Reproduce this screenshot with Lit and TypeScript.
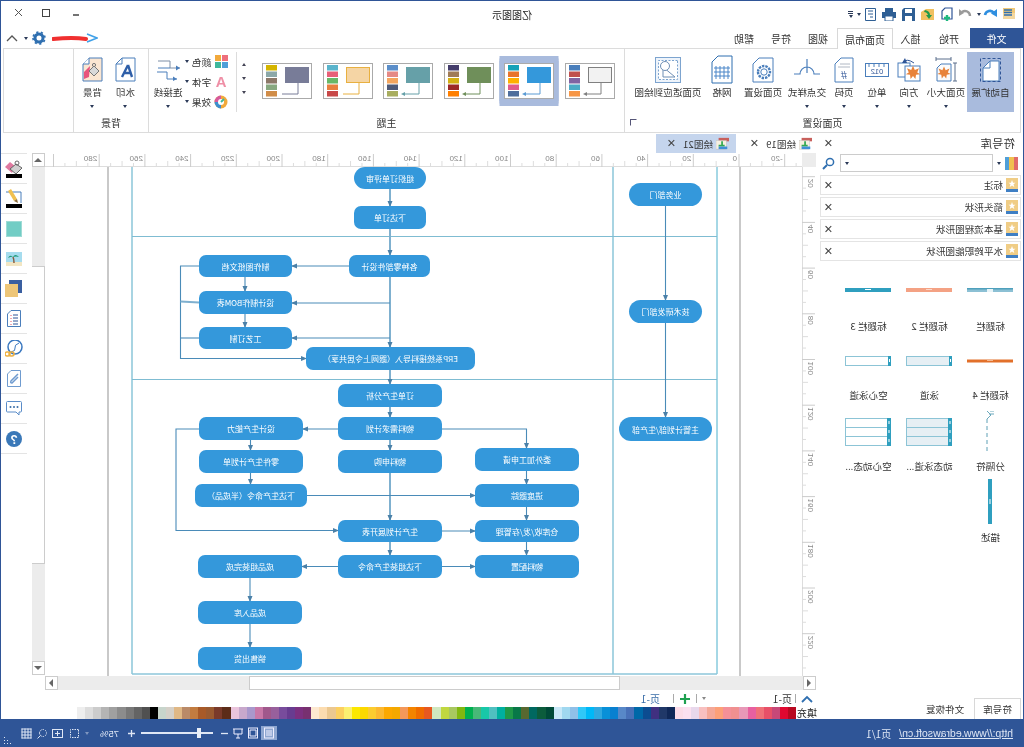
import { LitElement, html, css, svg } from "lit";
import { customElement } from "lit/decorators.js";

const BLUE = "#4a7ebb";
const ico = (w: number, h: number, vb: string, body: unknown) =>
  html`<svg width=${w} height=${h} viewBox=${vb} class="ic">${body}</svg>`;

const leaf = (x: number, y: number, s = 1) =>
  svg`<path transform="translate(${x} ${y}) scale(${s})" fill="#e8833a" d="M0-6 1.5-2.5 5-4 3.5-.5 6 1 2.5 1.5 2 5 0 2.5-2 5-2.5 1.5-6 1-3.5-.5-5-4-1.5-2.5Z"/>`;

const I = {
  auto: ico(24, 26, "0 0 24 26", svg`<path d="M3 4H12L19 11V24H3Z" fill="#fff" stroke="${BLUE}"/><path d="M12 4V11H19" fill="none" stroke="${BLUE}"/><rect x="1.5" y="1.5" width="20" height="23" fill="none" stroke="#2f5597" stroke-dasharray="3 2"/>`),
  size: ico(24, 26, "0 0 24 26", svg`<path d="M7 7H17L21 11V24H7Z" fill="#fbfbfb" stroke="${BLUE}"/>${leaf(14, 16, 1.1)}<path d="M7 2H22M7 0V4M22 0V4M3 6V24M1 6H5M1 24H5" stroke="#5a6f8c" fill="none"/>`),
  dir: ico(26, 26, "0 0 26 26", svg`<rect x="12" y="6" width="12" height="14" fill="#fff" stroke="${BLUE}"/><rect x="2" y="9" width="15" height="15" fill="#fff" stroke="${BLUE}"/>${leaf(9, 16, 1.2)}<path d="M8 6Q15 1 19 5" fill="none" stroke="#2f5597"/><path d="M17 1 20 6 15 6Z" fill="#2f5597"/>`),
  unit: ico(24, 20, "0 0 24 20", svg`<rect x=".5" y="3.5" width="23" height="13" fill="#fff" stroke="${BLUE}"/><path d="M5 4V7M10 4V7M15 4V7M20 4V7" stroke="${BLUE}"/><text x="12" y="14" text-anchor="middle" font-size="7.5" fill="#2f5597" font-family="Liberation Sans">012</text>`),
  num: ico(20, 26, "0 0 20 26", svg`<path d="M1 1H13L19 7V25H1Z" fill="#fff" stroke="${BLUE}"/><path d="M4 7H14M4 10H16" stroke="#b0b8c4"/><text x="10" y="22" text-anchor="middle" font-size="11" fill="#2f5597" font-family="Liberation Sans">#</text>`),
  cross: ico(26, 24, "0 0 26 24", svg`<path d="M0 16H6A7 7 0 0 1 20 16H26M13 1V15" fill="none" stroke="#4a7ebb" stroke-width="1.2"/>`),
  set: ico(22, 26, "0 0 22 26", svg`<path d="M1 1H15L21 7V25H1Z" fill="#fff" stroke="${BLUE}"/><circle cx="10" cy="15" r="6" fill="none" stroke="${BLUE}" stroke-width="2.4" stroke-dasharray="2.4 1"/><circle cx="10" cy="15" r="3.2" fill="none" stroke="${BLUE}"/>`),
  grid: ico(22, 29, "0 0 22 29", svg`<path d="M1 1H15L21 7V28H1Z" fill="#fff" stroke="#2f6fb0"/><path d="M5 11V24M9 11V24M13 11V24M17 11V24M3 13H19M3 17H19M3 21H19" stroke="#4a86c8"/>`),
  fit: ico(26, 26, "0 0 26 26", svg`<rect x=".5" y=".5" width="25" height="25" fill="#eef4fb" stroke="#7da4cf"/><rect x="3.5" y="3.5" width="19" height="19" fill="#fff" stroke="#7da4cf" stroke-dasharray="2 1.5"/><path d="M6 20 18 20 18 10Z" fill="none" stroke="#6f8fb5"/><circle cx="16" cy="9" r="4.5" fill="#fff" stroke="#6f8fb5"/>`),
  line: ico(24, 22, "0 0 24 22", svg`<path d="M0 9H10V2H22" fill="none" stroke="#7c8ea6"/><path d="M22 9H10" fill="none" stroke="#4a7ebb"/><path d="M3 20H13V13H23" fill="none" stroke="#4a7ebb"/><path d="M0 9 4 6.5V11.5Z" fill="#4a7ebb"/><path d="M3 20 7 17.5V22Z" fill="#4a7ebb"/>`),
  color: ico(13, 13, "0 0 13 13", svg`<rect width="6" height="6" fill="#ee6f7c"/><rect x="7" width="6" height="6" fill="#f2a93b"/><rect y="7" width="6" height="6" fill="#4f9fd8"/><rect x="7" y="7" width="6" height="6" fill="#3fb89c"/>`),
  font: html`<span class="fontA">A</span>`,
  fx: ico(14, 14, "0 0 14 14", svg`<circle cx="7" cy="7" r="6.5" fill="#f2a93b"/><path d="M7 7V.5A6.5 6.5 0 0 1 13.5 7Z" fill="#d65a9c"/><path d="M7 7H13.5A6.5 6.5 0 0 1 7 13.5Z" fill="#3c8fd0"/><circle cx="7" cy="7" r="3" fill="#fff"/><path d="M7 7 4 4" stroke="#3fb89c" stroke-width="2"/>`),
  mark: ico(24, 26, "0 0 24 26", svg`<path d="M2 1H15L21 7V24H2Z" fill="#fff" stroke="${BLUE}"/><path d="M15 1V7H21" fill="none" stroke="${BLUE}"/><path d="M9 8 5 20M9 8 15 20M6 16H13" stroke="#2f5fa8" stroke-width="2.4" fill="none"/>`),
  bg: ico(24, 26, "0 0 24 26", svg`<path d="M2 1H15L21 7V24H2Z" fill="#fbe6d2" stroke="${BLUE}"/><path d="M15 1V7H21" fill="#fff" stroke="${BLUE}"/><path d="M14 9 20 15 20 22 15 20Z" fill="#e8537c"/><path d="M5 14 10 9 15 14 10 19Z" fill="#d9d9d9" stroke="#777"/><circle cx="10" cy="8" r="1.6" fill="none" stroke="#777"/>`),
  qFile: ico(14, 14, "0 0 14 14", svg`<rect x="1" y="1" width="12" height="11" fill="#f0c878"/><rect x="1" y="6" width="12" height="6" fill="#f3d79f"/><path d="M4 3H12M4 5.500H12M4 8H12" stroke="#2f6fb0" stroke-width="1.6"/>`),
  qRedo: ico(15, 12, "0 0 15 12", svg`<path d="M13 7A5 5 0 0 0 4 5" fill="none" stroke="#2f8fe0" stroke-width="2.6"/><path d="M1 1 7 5.500 1 9Z" fill="#2f8fe0"/>`),
  qUndo: ico(14, 12, "0 0 14 12", svg`<path d="M2 8A5 5 0 0 1 10 4" fill="none" stroke="#9a9a9a" stroke-width="2.4"/><path d="M13 1 8 5 13 8Z" fill="#9a9a9a"/>`),
  qNew: ico(15, 15, "0 0 15 15", svg`<path d="M1 1H8L11 4V12H1Z" fill="#fff" stroke="#2f5597" stroke-width="1.2"/><path d="M3 11H9M6 8V14" stroke="#1fb87f" stroke-width="2.4"/>`),
  qOpen: ico(15, 13, "0 0 15 13", svg`<path d="M1 1H9L14 4V12H1Z" fill="#f0c060"/><path d="M10 2Q5 3 5 7L3 7 6 11 9 7 7 7Q8 4 11 4Z" fill="#1f9a4a"/>`),
  qSave: ico(13, 13, "0 0 13 13", svg`<path d="M0 0H11L13 2V13H0Z" fill="#2f5f94"/><rect x="3" y="1" width="7" height="4" fill="#fff"/><rect x="3" y="8" width="7" height="5" fill="#fff"/>`),
  qPrint: ico(14, 13, "0 0 14 13", svg`<rect x="3" y="0" width="8" height="4" fill="#2f5f94"/><rect y="4" width="14" height="6" fill="#2f5f94"/><rect x="3" y="8" width="8" height="5" fill="#fff" stroke="#2f5f94"/>`),
  qDoc: ico(11, 13, "0 0 11 13", svg`<path d="M.5.500H10.500V12.500H.5Z" fill="#fff" stroke="#2f5f94"/><path d="M3 3H8M3 6H8M3 9H6" stroke="#2f5f94"/>`),
};

const NODES: [string, number, number, number, number, number][] = [
  ["组织订单评审", 354, 426, 167, 189, 11],
  ["下达订单", 354, 426, 206, 229, 7],
  ["各种零部件设计", 349, 430, 255, 277, 7],
  ["制作图纸文档", 199, 292, 255, 277, 7],
  ["设计制作BOM表", 199, 292, 291, 314, 7],
  ["工艺订制", 199, 292, 327, 349, 7],
  ["ERP系统接料导入（跟网上令居共享）", 306, 475, 347, 370, 7],
  ["订单生产分析", 338, 442, 384, 407, 7],
  ["物料需求计划", 338, 442, 417, 440, 7],
  ["设计生产能力", 199, 303, 417, 440, 7],
  ["零件生产计划单", 199, 303, 450, 473, 7],
  ["下达生产命令（半成品）", 195, 307, 484, 507, 7],
  ["物料申购", 338, 442, 450, 473, 7],
  ["委外加工申请", 475, 579, 448, 471, 7],
  ["进度跟踪", 475, 579, 484, 507, 7],
  ["生产计划展开表", 338, 442, 520, 542, 7],
  ["仓库收/发/存管理", 475, 579, 520, 542, 7],
  ["下达组装生产命令", 338, 442, 555, 578, 7],
  ["物料配置", 475, 579, 555, 578, 7],
  ["成品组装完成", 198, 302, 555, 578, 7],
  ["成品入库", 198, 302, 601, 624, 7],
  ["销售出货", 198, 302, 647, 670, 7],
  ["业务部门", 629, 702, 183, 206, 12],
  ["技术研发部门", 629, 702, 300, 323, 12],
  ["主管计划部/生产部", 619, 712, 417, 441, 12],
];

// [points, arrow, thick]
const LINES: [number[][], number, number][] = [
  [[[390, 189], [390, 206]], 1, 1],
  [[[390, 229], [390, 255]], 1, 1],
  [[[390, 277], [390, 347]], 1, 1],
  [[[390, 370], [390, 384]], 1, 1],
  [[[390, 407], [390, 417]], 1, 1],
  [[[390, 440], [390, 450]], 1, 1],
  [[[390, 473], [390, 520]], 1, 1],
  [[[390, 542], [390, 555]], 1, 1],
  [[[349, 266], [292, 266]], 1, 0],
  [[[390, 303], [292, 303]], 1, 0],
  [[[390, 338], [292, 338]], 1, 0],
  [[[245, 277], [245, 291]], 1, 0],
  [[[245, 314], [245, 327]], 1, 0],
  [[[199, 266], [180.500, 266], [180.500, 358.500], [306, 358.500]], 1, 0],
  [[[199, 338], [180.500, 338]], 0, 0],
  [[[199, 302.500], [180.500, 301.500]], 0, 1],
  [[[338, 429], [303, 429]], 1, 0],
  [[[199, 429], [176, 429], [176, 530.500], [338, 530.500]], 1, 0],
  [[[442, 429], [526.500, 429], [526.500, 448]], 1, 0],
  [[[250.500, 440], [250.500, 450]], 1, 0],
  [[[250.500, 473], [250.500, 484]], 1, 0],
  [[[307, 495.500], [475, 495.500]], 1, 0],
  [[[526.500, 471], [526.500, 484]], 1, 0],
  [[[526.500, 507], [526.500, 520]], 1, 0],
  [[[526.500, 542], [526.500, 555]], 1, 0],
  [[[442, 531], [475, 531]], 1, 0],
  [[[338, 566.500], [302, 566.500]], 1, 0],
  [[[442, 566.500], [475, 566.500]], 1, 0],
  [[[250, 578], [250, 601]], 1, 0],
  [[[250, 624], [250, 647]], 1, 0],
  [[[665.500, 206], [665.500, 300]], 1, 0],
  [[[665.500, 323], [665.500, 417]], 1, 0],
];

const THEMES: [string[], string, string, string, number][] = [
  [["#4a7ebb", "#c0504d", "#8064a2", "#4bacc6", "#f79646"], "#f2f2f2", "#808080", "#808080", 1],
  [["#17a2b8", "#e8742c", "#ffb000", "#e05c8c", "#4f6e9c"], "#3498db", "#3498db", "#5a9bd4", 1],
  [["#443d6b", "#a07c58", "#d4b014", "#9c2828", "#ff7f00"], "#6f8f5a", "#6f8f5a", "#6f8f5a", 1],
  [["#5b8ec9", "#e58a86", "#f4a65e", "#4e5a78", "#a8ad5f"], "#66a0a8", "#66a0a8", "#66a0a8", 1],
  [["#5ab4cc", "#e86078", "#68b868", "#e88040", "#c84848"], "#f5d5a5", "#e8b040", "#e8b040", 0],
  [["#d4b400", "#8ca8a8", "#8c7868", "#88a880", "#d08c48"], "#787c98", "#787c98", "#787c98", 0],
];

const SWATCHES = "eeeeee dddddd cccccc b4b4b4 a0a0a0 8c8c8c 787878 646464 505050 000000 c8d5cc d5d0c8 e0b885 ba8a68 c27c40 a85a28 9a5a30 7a3a2a 5c2c18 eac4dc c8a8cc a998cc c878a8 a0588c 98609c 784c9c 683c90 7c3080 783070 fde8d0 fcdcb0 ecc890 fcd060 fcf070 fce800 fcd800 fccc30 fcb830 fca800 f4a800 f4985a f48400 f06c00 e85820 d0e8c0 c0d840 a8c860 80b810 00b050 48b878 18c8a8 50c0c0 00b0a0 209848 087848 586830 006860 0c5c3c 004a38 c8e8f8 a0d8f0 90c0e8 30c8f8 00b8f8 30a8e0 0890d8 0880d0 5888c8 4870b8 0068a8 0c4c90 403080 203868 102858 fcdce8 fce0f0 e8d8ec f8c0c0 f4a898 fca078 f49098 f09090 e898b8 e860a0 f07078 e85068 c84878 e00830 b80820".split(" ").reverse();

const cx = (x: number) => 802 - x;
const cy = (y: number) => y - 167;

const range = (a: number, b: number, s: number) => {
  const r: number[] = [];
  for (let v = a; v <= b; v += s) r.push(v);
  return r;
};

const star = ico(12, 14, "0 0 12 14", svg`<rect width="12" height="14" fill="#f0cd86"/><rect y="11" width="12" height="3" fill="#3f7fc4"/><path d="M6 2 7 4.700 9.500 4.700 7.500 6.300 8.300 9 6 7.400 3.700 9 4.500 6.300 2.500 4.700 5 4.700Z" fill="#fff"/>`);
const docTabIcon = ico(13, 13, "0 0 15 13", svg`<rect x="0" y="0" width="12" height="4" fill="#c8605c"/><rect x="3" y="3" width="12" height="10" fill="#f6f0e2" stroke="#bbb" stroke-width=".5"/><path d="M8 4V9M5 9H12" stroke="#32a852" stroke-width="2"/><rect x="2" y="10" width="10" height="3" fill="#3f8fd8"/>`);

@customElement("app-root")
export class AppRoot extends LitElement {
  static styles = css`
    :host {
      display: flex;
      flex-direction: column;
      width: 1024px;
      height: 747px;
      box-sizing: border-box;
      transform: scaleX(-1);
      filter: blur(0.3px);
      overflow: hidden;
      background: #fff;
      border: 1px solid #2f5597;
      border-bottom: 0;
      font-family: "Noto Sans CJK SC", "Liberation Sans", sans-serif;
      font-size: 10px;
      color: #333;
      --nv: #2f5597;
    }
    svg.ic { display: block; flex: none; }
    .title { display: grid; grid-template-columns: 1fr auto 1fr; height: 26px; align-items: center; flex: none; }
    .qa { display: flex; align-items: center; padding-left: 5px; }
    .qa > div { display: flex; justify-content: center; align-items: center; height: 16px; }
    .caret { width: 0; height: 0; border: 2.500px solid transparent; border-top: 3px solid #2b3a58; border-bottom: 0; }
    .ddbar { display: flex; flex-direction: column; align-items: center; gap: 1px; }
    .ddbar i { display: block; width: 5px; height: 1px; background: #2b3a58; }
    .ttl { font-size: 10px; color: #222; }
    .win { display: flex; justify-content: flex-end; align-items: center; }
    .tabs { display: flex; height: 20px; flex: none; margin-top: 1px; align-items: stretch; }
    .tab { display: flex; align-items: center; justify-content: center; box-sizing: border-box; }
    .tab.file { background: var(--nv); color: #fff; }
    .tab.on { border: 1px solid #d8d8d8; border-bottom: 0; background: #fff; margin-bottom: -1px; position: relative; z-index: 1; }
    .qr { flex: 1; display: flex; align-items: center; justify-content: flex-end; padding-right: 4px; }
    .ribbon { display: flex; height: 85px; flex: none; box-sizing: border-box; margin: 0 2px; border: 1px solid #dcdcdc; }
    .grp { display: flex; flex-direction: column; border-right: 1px solid #dcdcdc; box-sizing: border-box; position: relative; flex: none; }
    .grp-body { display: flex; flex: none; padding-top: 3px; box-sizing: border-box; height: 65px; align-items: flex-start; }
    .grp-label { flex: 1; display: flex; align-items: center; justify-content: center; color: #333; padding-bottom: 2px; }
    .launch { position: absolute; right: 5px; bottom: 6px; width: 5px; height: 5px; border: 1px solid #557; border-left-color: transparent; border-bottom-color: transparent; }
    .rbtn { display: flex; flex-direction: column; align-items: center; height: 60px; box-sizing: border-box; }
    .rbtn.on { background: #a9bbdd; }
    .rbtn .icw { height: 31px; display: flex; align-items: center; justify-content: center; padding-top: 2px; }
    .rbtn .lb { height: 14px; line-height: 14px; white-space: nowrap; margin-top: 0; font-size: 9.6px; }
    .rbtn .caret { margin-top: 6px; }
    .gallery { display: flex; gap: 10.600px; padding: 14px 0 0 9px; width: 372px; box-sizing: border-box; }
    .thumb { width: 50px; height: 36px; flex: none; box-sizing: border-box; border: 1px solid #aaa; background: #fff; }
    .thumb.sel { box-shadow: 0 0 0 4.500px #a9bbdd, 0 2.500px 0 4.500px #a9bbdd, 0 -2.500px 0 4.500px #a9bbdd; }
    .garrows { width: 16px; display: flex; flex-direction: column; align-items: center; padding-top: 11px; gap: 11px; border-right: 1px solid #dcdcdc; height: 60px; box-sizing: border-box; }
    .garrows span { display: block; width: 0; height: 0; border: 2.500px solid transparent; }
    .garrows .u { border-bottom: 3px solid #445; border-top: 0; }
    .garrows .d { border-top: 3px solid #445; border-bottom: 0; }
    .fxs { width: 51px; padding: 5px 0 0 8px; box-sizing: border-box; display: flex; flex-direction: column; gap: 5px; }
    .fx { display: flex; align-items: center; height: 15px; gap: 3px; font-size: 9.6px; white-space: nowrap; }
    .fx > :first-child { width: 14px; display: flex; justify-content: center; }
    .fontA { font: bold 15px/15px "Liberation Sans", sans-serif; color: #ef8fa6; }
    .main { flex: 1; display: flex; min-height: 0; }
    .panel { width: 201px; flex: none; display: flex; flex-direction: column; position: relative; box-sizing: border-box; padding: 0 0 0 2px; }
    .ph { display: flex; justify-content: space-between; align-items: center; height: 20px; font-size: 11.500px; padding: 0 2px 0 6px; flex: none; }
    .x { font: 11px/11px "Liberation Sans", sans-serif; color: #444; }
    .srch { display: flex; align-items: center; height: 18px; padding-left: 3px; flex: none; margin-top: 1px; }
    .inp { width: 153px; height: 18px; box-sizing: border-box; border: 1px solid #ccc; display: flex; align-items: center; justify-content: flex-end; padding-right: 4px; margin: 0 5px 0 4px; }
    .secs { display: flex; flex-direction: column; gap: 2px; margin-top: 3px; width: 201px; }
    .sec { height: 20px; border: 1px solid #e4e4e4; box-sizing: border-box; display: flex; align-items: center; gap: 3px; padding: 0 3px 0 2px; font-size: 9.6px; }
    .sec b { font-weight: 400; flex: 1; }
    .shapes { display: grid; grid-template-columns: repeat(3, 61px); margin-top: 10px; }
    .cell { display: flex; flex-direction: column; align-items: center; }
    .cell .s { display: flex; align-items: center; justify-content: center; width: 100%; }
    .cell .l { display: flex; align-items: center; justify-content: center; font-size: 9.6px; white-space: nowrap; }
    .ptabs { position: absolute; left: 2px; bottom: 0; display: flex; align-items: stretch; height: 21px; }
    .ptab { width: 47px; display: flex; align-items: center; justify-content: center; border: 1px solid #d8d8d8; border-bottom: 0; box-sizing: border-box; font-size: 9.6px; }
    .ptab.off { border: 0; width: 58px; }
    .center { width: 790px; flex: none; display: flex; flex-direction: column; }
    .dtabs { display: flex; height: 19px; margin-top: 1px; flex: none; width: 822px; position: relative; z-index: 2; }
    .dtab { width: 86px; display: flex; align-items: center; gap: 3px; padding-left: 10px; box-sizing: border-box; font-size: 9.6px; }
    .dtab .x { margin-left: 4px; }
    .dtab.on { background: #c5d5ed; width: 80px; padding-left: 7px; }
    .work { display: grid; grid-template-columns: 14px 757px 13px; grid-template-rows: 14px 509px 14px; margin-left: 6px; flex: none; }
    .corner { background: #ececec; }
    .vruler, .hruler { background: #fff; overflow: hidden; }
    .canvas { position: relative; overflow: hidden; background: #fff; }
    .canvas svg { position: absolute; inset: 0; }
    .node { position: absolute; display: flex; align-items: center; justify-content: center; background: #3498db; color: #fff; font-size: 8px; white-space: nowrap; box-sizing: border-box; }
    .vs { grid-column: 3; grid-row: 1 / 4; display: flex; flex-direction: column; height: 522px; }
    .sb { display: flex; align-items: center; justify-content: center; background: #fff; border: 1px solid #ccc; box-sizing: border-box; flex: none; }
    .track { background: #ececec; flex: none; }
    .thv { background: #fff; border: 1px solid #ccc; border-right: 0; border-left: 1px solid #ccc; box-sizing: border-box; flex: none; }
    .hs { grid-column: 1 / 3; grid-row: 3; display: flex; height: 14px; }
    .tri-u { width: 0; height: 0; border: 4px solid transparent; border-bottom: 4px solid #666; border-top: 0; }
    .tri-d { width: 0; height: 0; border: 4px solid transparent; border-top: 4px solid #666; border-bottom: 0; }
    .tri-l { width: 0; height: 0; border: 4px solid transparent; border-right: 4px solid #666; border-left: 0; }
    .tri-r { width: 0; height: 0; border: 4px solid transparent; border-left: 4px solid #666; border-right: 0; }
    .pages { display: flex; align-items: center; height: 17px; flex: none; font-size: 10px; padding-left: 9px; position: relative; }
    .pages .sep { width: 1px; height: 9px; background: #aaa; }
    .colors { display: flex; height: 12px; flex: none; align-items: stretch; padding-left: 5px; }
    .colors span { width: 21px; font-size: 10px; line-height: 12px; color: #222; white-space: nowrap; }
    .colors i { display: block; width: 8.080px; flex: none; }
    .side { flex: 1; display: flex; flex-direction: column; margin-top: 20px; }
    .sic { height: 30px; box-sizing: border-box; border-top: 1.500px solid #e4e4e4; display: flex; align-items: center; justify-content: center; margin-left: 5px; }
    .status { height: 28px; flex: none; background: var(--nv); color: #dfe7f5; display: flex; justify-content: space-between; align-items: center; margin: 0 -1px; padding: 0 3px 0 11px; font-size: 10px; position: relative; }
    .status .left { display: flex; gap: 8px; align-items: center; }
    .status u { font-family: "Liberation Sans", sans-serif; font-size: 10.500px; }
    .status .right { display: flex; align-items: center; height: 100%; }
    .st { display: flex; align-items: center; justify-content: center; }
    .st.on { background: #8ea6d0; height: 14px; }
    .st.grip { width: 16px; align-self: flex-end; padding-bottom: 2px; justify-content: flex-end; }
    .slider { width: 72px; height: 1.500px; background: #dfe7f5; position: relative; margin: 0 5px; }
    .slider::after { content: ""; position: absolute; left: 12px; top: -4px; width: 4px; height: 10px; background: #e8eef8; }
  `;

  private rb(label: string, w: number, icon: unknown, caret = false, on = false) {
    return html`<div class="rbtn ${on ? "on" : ""}" style="width:${w}px">
      <div class="icw">${icon}</div><div class="lb">${label}</div>${caret ? html`<div class="caret"></div>` : ""}
    </div>`;
  }

  private thumb(t: [string[], string, string, string, number], sel: boolean) {
    const [sw, fill, stroke, ln, arrow] = t;
    return html`<div class="thumb ${sel ? "sel" : ""}"><svg width="48" height="34" viewBox="0 0 48 34" class="ic">
      ${sw.map((c, i) => svg`<rect x="34" y=${1 + i * 6.500} width="11" height="5.500" fill=${c}/>`)}
      <rect x="2.500" y="3.500" width="23" height="15" fill=${fill} stroke=${stroke}/>
      <path d="M13 19V30H29" fill="none" stroke=${ln} stroke-width="1"/>
      ${arrow ? svg`<path d="M31 30 27 28V32Z" fill=${ln}/>` : ""}
    </svg></div>`;
  }

  private shape(kind: string) {
    const teal = "#2f9fbf";
    const bar = (c: string, h: number, c2 = "#fff") => svg`<rect x="0" y=${(8 - h) / 2} width="46" height=${h} fill=${c}/><rect x="20" y="3" width="6" height="1" fill=${c2}/>`;
    if (kind === "t1") return ico(46, 8, "0 0 46 8", svg`<rect y="2" width="46" height="4" fill="#8cc0d4"/><rect y="2" width="46" height="1.500" fill="#4fa0bc"/><rect x="20" y="3" width="6" height="3" fill="#e8f4f8"/>`);
    if (kind === "t2") return ico(46, 8, "0 0 46 8", bar("#f4a284", 4, "#fcd8c8"));
    if (kind === "t3") return ico(46, 8, "0 0 46 8", bar(teal, 4));
    if (kind === "t4") return ico(46, 8, "0 0 46 8", bar("#e2702a", 3, "#f4b890"));
    if (kind === "lane" || kind === "hollow") return ico(46, 10, "0 0 46 10", svg`<rect x=".5" y=".5" width="45" height="9" fill=${kind === "lane" ? "#e6eff4" : "#fff"} stroke="#8cc4d6"/><rect x="0" y="0" width="3" height="10" fill=${teal}/><rect x="1" y="3" width="1" height="3" fill="#fff"/>`);
    if (kind === "sep") return ico(14, 42, "0 0 14 42", svg`<path d="M7 0H3M10 0 6 4 10 8" fill="none" stroke="#6aa8bc"/><path d="M3 3H8" stroke="#6aa8bc"/><path d="M10 8V42" stroke="#5fa0b6" stroke-dasharray="4 3"/>`);
    if (kind === "dyn" || kind === "hdyn") {
      const f = kind === "dyn" ? "#e6eff4" : "#fff";
      return ico(46, 28, "0 0 46 28", svg`${[0.5, 9.5, 18.5].map((y) => svg`<rect x=".5" y=${y} width="45" height="9" fill=${f} stroke="#8cc4d6"/>`)}<rect width="4" height="28" fill=${teal}/><path d="M2 3V6M2 12V15M2 21V24" stroke="#fff"/>`);
    }
    return ico(6, 45, "0 0 6 45", svg`<rect x="1" width="4" height="45" fill=${teal}/><rect x="2.500" y="20" width="1" height="5" fill="#fff"/>`);
  }

  render() {
    const qa: [number, unknown][] = [
      [18, I.qFile], [18, I.qRedo], [6, html`<div class="caret"></div>`], [21, I.qUndo], [18, I.qNew], [19, I.qOpen], [19, I.qSave],
      [19, I.qPrint], [18, I.qDoc], [6, html`<div class="caret"></div>`], [10, html`<div class="ddbar"><i></i><i></i><div class="caret"></div></div>`],
    ];
    const tabs: [string, number, string][] = [["文件", 53, "file"], ["开始", 42, ""], ["插入", 35, ""], ["页面布局", 56, "on"], ["视图", 38, ""], ["符号", 36, ""], ["帮助", 38, ""]];
    const shapes: [string, string, number, number][] = [
      ["标题栏", "t1", 38, 34], ["标题栏 2", "t2", 38, 34], ["标题栏 3", "t3", 38, 34],
      ["标题栏 4", "t4", 36, 32], ["泳道", "lane", 36, 32], ["空心泳道", "hollow", 36, 32],
      ["分隔符", "sep", 42, 26], ["动态泳道...", "dyn", 42, 26], ["空心动态...", "hdyn", 42, 26],
      ["描述", "desc", 45, 26],
    ];
    const side = [
      ico(20, 20, "0 0 20 20", svg`<rect x="2" y="15" width="16" height="4" fill="#000"/><path d="M9 7 14 3 19 8 12 14Z" fill="#e07aa0"/><path d="M2 9 8 5 14 10 8 15Z" fill="#d0d0d0" stroke="#666"/><circle cx="7" cy="4" r="2" fill="none" stroke="#666"/>`),
      ico(20, 20, "0 0 20 20", svg`<path d="M1 3H16V14" fill="none" stroke="#4a7ebb" transform="translate(2 0) scale(-1 1) translate(-17 0)"/><path d="M16 2 10 12 7 10 13 0Z" fill="#f0c050"/><path d="M7 10 6 14 10 12Z" fill="#8a6a3a"/><rect x="2" y="15" width="16" height="4" fill="#000"/>`),
      ico(16, 16, "0 0 16 16", svg`<rect x=".5" y=".5" width="15" height="15" fill="#72cdc5" stroke="#9edbd5"/>`),
      ico(16, 14, "0 0 16 14", svg`<rect width="16" height="14" fill="#a6dcee"/><rect y="10" width="16" height="4" fill="#f2e6c4"/><path d="M8 11Q8 7 9 5" stroke="#8a5a3a" fill="none" stroke-width="1.500"/><path d="M3 5Q7 1 9 5Q12 2 14 6Q10 4 9 5Q6 4 3 5Z" fill="#1f9a7a"/>`),
      ico(17, 17, "0 0 17 17", svg`<rect x="0" y="0" width="13" height="13" fill="#3a5fa0"/><rect x="4" y="4" width="13" height="13" fill="#eec678"/>`),
      ico(14, 17, "0 0 14 17", svg`<path d="M.5.500H10L13.500 4V16.500H.5Z" fill="#fff" stroke="#4a7ebb"/><path d="M3 5H8M3 8H8M3 11H8M3 14H8" stroke="#2f5597"/><path d="M10 5V6M10 8V9M10 11V12M10 14V15" stroke="#e05060"/>`),
      ico(18, 18, "0 0 18 18", svg`<circle cx="8" cy="7" r="7" fill="#fff" stroke="#3a78c0" stroke-width="1.500"/><path d="M4 3Q9 5 8 8T12 12" fill="none" stroke="#3a78c0"/><rect x="9" y="12" width="5" height="4" rx="2" fill="none" stroke="#eeb040" stroke-width="1.500"/><rect x="13" y="12" width="5" height="4" rx="2" fill="none" stroke="#eeb040" stroke-width="1.500"/>`),
      ico(14, 17, "0 0 14 17", svg`<path d="M.5.500H10L13.500 4V16.500H.5Z" fill="#fff" stroke="#6f9bcf"/><path d="M3 4 10 11Q11 13 9 13L3 7" fill="none" stroke="#6f9bcf" stroke-width="1.500"/>`),
      ico(16, 15, "0 0 16 15", svg`<path d="M1.500.500H14.500Q15.500.500 15.500 1.500V10Q15.500 11 14.500 11H6L3 14V11H1.500Q.5 11 .5 10V1.500Q.5.500 1.500.500Z" fill="#fff" stroke="#5a8cc8"/><circle cx="4.500" cy="6" r="1" fill="#3a6ea8"/><circle cx="8" cy="6" r="1" fill="#3a6ea8"/><circle cx="11.500" cy="6" r="1" fill="#3a6ea8"/>`),
      ico(16, 16, "0 0 16 16", svg`<circle cx="8" cy="8" r="8" fill="#3a78b8"/><text x="8" y="12.500" text-anchor="middle" font-size="12" font-weight="700" fill="#fff" font-family="Liberation Sans">?</text>`),
    ];
    const X = html`<span class="x">✕</span>`;
    return html`
      <div class="title">
        <div class="qa">${qa.map(([w, i]) => html`<div style="width:${w}px">${i}</div>`)}</div>
        <div class="ttl">亿图图示</div>
        <div class="win">
          <svg width="90" height="14" viewBox="0 0 90 14" class="ic">
            <path d="M12 8H18" stroke="#444" stroke-width="1.500"/><rect x="41.500" y="2.500" width="7" height="7" fill="none" stroke="#444"/><path d="M69 2 76 9M76 2 69 9" stroke="#555"/>
          </svg>
        </div>
      </div>
      <div class="tabs">
        ${tabs.map(([t, w, c]) => html`<div class="tab ${c}" style="width:${w}px">${t}</div>`)}
        <div class="qr">
          <svg width="46" height="12" viewBox="0 0 46 12" class="ic"><path d="M11 2 1 6 11 10" fill="none" stroke="#3fa0e8" stroke-width="1.500"/><path d="M12 7Q25 5 45 7" stroke="#f03030" stroke-width="4" fill="none" stroke-linecap="round"/></svg>
          <svg width="14" height="14" viewBox="0 0 14 14" class="ic" style="margin-left:6px"><circle cx="7" cy="7" r="4" fill="none" stroke="#2f6fb0" stroke-width="3"/><circle cx="7" cy="7" r="6" fill="none" stroke="#2f6fb0" stroke-width="1.600" stroke-dasharray="2.200 2.500"/></svg>
          <div class="caret" style="margin-left:4px"></div>
          <svg width="14" height="10" viewBox="0 0 14 10" class="ic" style="margin-left:5px"><path d="M2 8 7 3 12 8" fill="none" stroke="#555" stroke-width="1.300"/></svg>
        </div>
      </div>
      <div class="ribbon">
        <div class="grp" style="width:396px">
          <div class="grp-body" style="padding-left:6px">
            ${this.rb("自动扩展", 47, I.auto, false, true)}
            ${this.rb("页面大小", 42, I.size, true)}
            ${this.rb("方向", 32, I.dir, true)}
            ${this.rb("单位", 32, I.unit, true)}
            ${this.rb("页码", 34, I.num, true)}
            ${this.rb("交点样式", 40, I.cross, true)}
            ${this.rb("页面设置", 48, I.set)}
            ${this.rb("网格", 34, I.grid)}
            ${this.rb("页面适应到绘图", 74, I.fit)}
          </div>
          <div class="grp-label">页面设置</div>
          <div class="launch"></div>
        </div>
        <div class="grp" style="width:476px">
          <div class="grp-body" style="padding-top:0">
            <div class="gallery">${THEMES.map((t, i) => this.thumb(t, i === 1))}</div>
            <div class="garrows" style="margin-top:3px"><span class="u"></span><span class="d"></span><span class="d"></span></div>
            <div class="fxs">
              <div class="fx"><div>${I.color}</div>颜色<div class="caret"></div></div>
              <div class="fx"><div>${I.font}</div>字体<div class="caret"></div></div>
              <div class="fx"><div>${I.fx}</div>效果<div class="caret"></div></div>
            </div>
            <div style="padding-top:3px">${this.rb("连接线", 34, I.line, true)}</div>
          </div>
          <div class="grp-label">主题</div>
        </div>
        <div class="grp" style="width:75px">
          <div class="grp-body" style="padding-left:6px">
            ${this.rb("水印", 33, I.mark, true)}
            ${this.rb("背景", 33, I.bg, true)}
          </div>
          <div class="grp-label">背景</div>
        </div>
      </div>
      <div class="main">
        <div class="panel">
          <div class="ph"><span>符号库</span>${X}</div>
          <div class="srch">
            ${ico(13, 13, "0 0 13 13", svg`<rect width="4" height="13" fill="#e06a6a"/><rect x="4" width="5" height="13" fill="#f0c050"/><rect x="9" width="4" height="13" fill="#4f9fd8"/>`)}
            <div class="caret" style="margin-left:4px"></div>
            <div class="inp"><div class="caret"></div></div>
            <svg width="13" height="13" viewBox="0 0 13 13" class="ic"><path d="M12 12 8 8" stroke="#2f6fb0" stroke-width="2"/><circle cx="5" cy="5" r="3.600" fill="#fff" stroke="#2f6fb0" stroke-width="1.500"/></svg>
          </div>
          <div class="secs">
            ${["标注", "箭头形状", "基本流程图形状", "水平跨职能图形状"].map((t) => html`<div class="sec">${star}<b>${t}</b>${X}</div>`)}
          </div>
          <div class="shapes">
            ${shapes.map(([l, k, a, b]) => html`<div class="cell"><div class="s" style="height:${a}px">${this.shape(k)}</div><div class="l" style="height:${b}px">${l}</div></div>`)}
          </div>
          <div class="ptabs"><div class="ptab">符号库</div><div class="ptab off">文件恢复</div></div>
        </div>
        <div class="center">
          <div class="dtabs">
            <div class="dtab">${docTabIcon}绘图19${X}</div>
            <div class="dtab on">${docTabIcon}绘图21${X}</div>
          </div>
          <div class="work">
            <div class="corner"></div>
            <div class="hruler">
              <svg width="757" height="14" viewBox="0 0 757 14" class="ic">
                <rect x="0" y="13" width="757" height="1" fill="#ddd"/>
                ${range(-25, 310, 5).map((v) => {
                  const x = 63 + 2.285 * v;
                  const big = v % 20 === 0;
                  return svg`<path d="M${x} ${big ? 1 : v % 10 === 0 ? 8 : 10}V14" stroke=${big ? "#ccc" : "#ddd"}/>${big && v < 300 ? svg`<text x=${x + 2} y="8" font-size="8" fill="#888" font-family="Liberation Sans">${v}</text>` : ""}`;
                })}
              </svg>
            </div>
            <div class="vruler">
              <svg width="14" height="509" viewBox="0 0 14 509" class="ic">
                <rect x="13" y="0" width="1" height="509" fill="#ddd"/>
                ${range(20, 235, 5).map((v) => {
                  const y = -36 + 2.285 * v;
                  const big = v % 20 === 0;
                  return svg`<path d="M${big ? 1 : v % 10 === 0 ? 8 : 10} ${y}H14" stroke=${big ? "#ccc" : "#ddd"}/>${big ? svg`<text transform="translate(3 ${y + 2}) rotate(90)" font-size="8" fill="#888" font-family="Liberation Sans">${v}</text>` : ""}`;
                })}
              </svg>
            </div>
            <div class="canvas">
              <svg width="757" height="509" viewBox="0 0 757 509">
                <defs>
                  <marker id="ah" markerUnits="userSpaceOnUse" markerWidth="6" markerHeight="6" refX="5" refY="3" orient="auto"><path d="M0 .5 6 3 0 5.500Z" fill="#4a80a8"/></marker>
                </defs>
                <path d="M${cx(108)} 0V509M${cx(740)} 0V509" stroke="#c9c9c9" stroke-width="2"/>
                <path d="M${cx(132)} 0V${cy(674)}M${cx(613)} 0V${cy(674)}" stroke="#a8d4e2" stroke-width="2"/>
                <path d="M${cx(717)} 0V${cy(674)}" stroke="#4cb0cc"/>
                <path d="M${cx(717)} ${cy(236.500)}H${cx(132)}M${cx(717)} ${cy(379.500)}H${cx(132)}" stroke="#7fbcd2"/>
                <path d="M${cx(717)} ${cy(674)}H${cx(132)}" stroke="#8cc6da" stroke-width="1.500"/>
                ${LINES.map(([p, a, t]) => svg`<path d=${"M" + p.map(([x, y]) => `${cx(x)} ${cy(y)}`).join("L")} fill="none" stroke=${t ? "#7fb0cf" : "#4a8bb8"} stroke-width=${t ? 2 : 1.100} marker-end=${a ? "url(#ah)" : ""}/>`)}
              </svg>
              ${NODES.map(([t, x1, x2, y1, y2, r]) => html`<div class="node" style="left:${cx(x2)}px;top:${cy(y1)}px;width:${x2 - x1}px;height:${y2 - y1}px;border-radius:${r}px">${t}</div>`)}
            </div>
            <div class="vs">
              <div class="sb" style="height:14px"><div class="tri-u"></div></div>
              <div class="track" style="height:99px"></div>
              <div class="thv" style="height:298px"></div>
              <div class="track" style="height:97px"></div>
              <div class="sb" style="height:14px"><div class="tri-d"></div></div>
            </div>
            <div class="hs">
              <div class="sb" style="width:13px"><div class="tri-l"></div></div>
              <div class="track" style="width:183px"></div>
              <div class="thv" style="width:371px;border:1px solid #ccc"></div>
              <div class="track" style="width:191px"></div>
              <div class="sb" style="width:13px"><div class="tri-r"></div></div>
            </div>
          </div>
          <div class="pages">
            <svg width="12" height="8" viewBox="0 0 12 8" class="ic"><path d="M1 7 6 2 11 7" fill="none" stroke="#2f6fb0" stroke-width="1.800"/></svg>
            <div class="sep" style="margin-left:5px"></div>
            <span style="margin-left:3px">页-1</span>
            <span style="width:67px"></span>
            <div class="caret" style="border-top-color:#888"></div>
            <div class="sep" style="margin-left:5px"></div>
            <svg width="12" height="12" viewBox="0 0 12 12" class="ic" style="margin-left:5px"><path d="M6 1V11M1 6H11" stroke="#1fa050" stroke-width="2.200"/></svg>
            <div class="sep" style="margin-left:5px"></div>
            <span style="margin-left:13px;color:#3a6ea8">页-1</span>
          </div>
          <div class="colors"><span>填充</span>${SWATCHES.map((c) => html`<i style="background:#${c}"></i>`)}</div>
        </div>
        <div class="side">
          ${side.map((s) => html`<div class="sic">${s}</div>`)}
          <div class="sic" style="height:2px"></div>
        </div>
      </div>
      <div class="status">
        <div class="left"><u>http://www.edrawsoft.cn/</u><span>页1/1</span></div>
        <div class="right">
          <div class="st on" style="width:16px">${ico(12, 12, "0 0 12 12", svg`<rect x="1.500" y="1" width="9" height="10" fill="none" stroke="#eef"/><path d="M3 4H9M3 6H9M3 8H9" stroke="#eef"/>`)}</div>
          <div class="st" style="width:15px">${ico(12, 12, "0 0 12 12", svg`<rect x="1.500" y="1" width="9" height="10" fill="none" stroke="#eef"/><path d="M3 3H9V9H3Z" fill="none" stroke="#eef"/>`)}</div>
          <div class="st" style="width:15px">${ico(12, 12, "0 0 12 12", svg`<path d="M1 2H11M2 2V7H10V2M6 7V11M4 11H8" fill="none" stroke="#eef"/>`)}</div>
          <div class="st" style="width:13px">${ico(9, 9, "0 0 9 9", svg`<path d="M1 4.500H8" stroke="#dfe7f5" stroke-width="1.300"/>`)}</div>
          <div class="slider"></div>
          <div class="st" style="width:9px">${ico(9, 9, "0 0 9 9", svg`<path d="M1 4.500H8M4.500 1V8" stroke="#dfe7f5" stroke-width="1.300"/>`)}</div>
          <span style="margin-left:8px;width:22px;font-family:'Liberation Sans',sans-serif;font-size:9.500px">75%</span>
          <div class="caret" style="margin-left:8px;border-top-color:#7f96c0"></div>
          <div class="st" style="width:20px">${ico(11, 11, "0 0 11 11", svg`<rect x="1.500" y="1.500" width="8" height="8" fill="none" stroke="#dfe7f5" stroke-dasharray="1.500 1"/>`)}</div>
          <div class="st" style="width:15px">${ico(11, 11, "0 0 11 11", svg`<rect x=".5" y="1.500" width="10" height="8" fill="none" stroke="#dfe7f5"/><path d="M3 5.500H8M5.500 3V8" stroke="#dfe7f5"/>`)}</div>
          <div class="st" style="width:15px">${ico(11, 11, "0 0 11 11", svg`<circle cx="5" cy="5" r="3.500" fill="none" stroke="#dfe7f5" stroke-dasharray="1.500 1"/><path d="M7.500 7.500 10.500 10.500" stroke="#dfe7f5"/>`)}</div>
          <div class="st" style="width:16px">${ico(11, 11, "0 0 11 11", svg`<path d="M1 .5V10.500M4 .5V10.500M7 .5V10.500M10 .5V10.500M.5 1H10.500M.5 4H10.500M.5 7H10.500M.5 10H10.500" stroke="#dfe7f5"/>`)}</div>
          <div class="st grip">${ico(9, 9, "0 0 9 9", svg`<path d="M7 1h1v1H7zM7 4h1v1H7zM4 4h1v1H4zM7 7h1v1H7zM4 7h1v1H4zM1 7h1v1H1z" fill="#dfe7f5"/>`)}</div>
        </div>
      </div>
    `;
  }
}
